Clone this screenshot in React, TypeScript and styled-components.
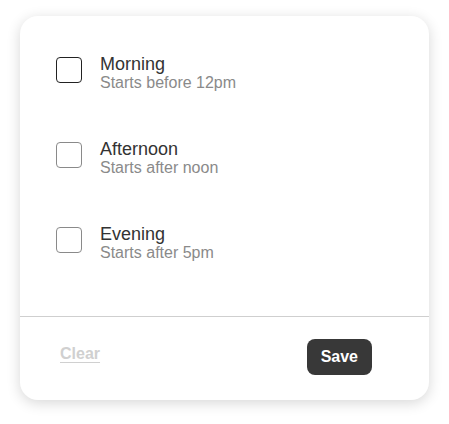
import React, { useState } from 'react';
import styled, { createGlobalStyle } from 'styled-components';

const GlobalStyle = createGlobalStyle`
  body {
    margin: 0;
    background: #ffffff;
    font-family: "Liberation Sans", Arial, sans-serif;
  }
`

const Page = styled.div`
  padding: 16px 20px;
`

const Card = styled.div`
  width: 409px;
  height: 384px;
  box-sizing: border-box;
  background: #fff;
  border-radius: 18px;
  box-shadow: 0 3px 14px rgba(0, 0, 0, 0.16);
  display: flex;
  flex-direction: column;
`

const List = styled.div`
  display: flex;
  flex-direction: column;
  gap: 48px;
  padding: 38px 36px 55px;
`

const Row = styled.label`
  display: flex;
  align-items: flex-start;
  gap: 18px;
  cursor: pointer;
`

const Box = styled.span<{ $focused?: boolean }>`
  width: 26px;
  height: 26px;
  box-sizing: border-box;
  margin-top: 3px;
  border: 1px solid ${p => (p.$focused ? '#222' : '#8a8a8a')};
  border-radius: 4px;
  flex-shrink: 0;
`

const Text = styled.div`
  display: flex;
  flex-direction: column;
`

const Title = styled.div`
  font-size: 18px;
  line-height: 20px;
  color: #333;
`

const Sub = styled.div`
  font-size: 16px;
  line-height: 17px;
  color: #8a8a8a;
`

const Divider = styled.div`
  height: 1px;
  background: #cfcfcf;
`

const Footer = styled.div`
  display: flex;
  justify-content: space-between;
  align-items: flex-start;
  padding: 22px 57px 0 40px;
`

const ClearLink = styled.button`
  margin-top: 6px;
  padding: 0;
  border: none;
  background: none;
  font-family: inherit;
  font-size: 16px;
  line-height: 18px;
  font-weight: bold;
  color: #d0d0d0;
  text-decoration: underline;
  text-underline-offset: 3px;
  cursor: pointer;
`

const SaveButton = styled.button`
  height: 36px;
  padding: 0 14px;
  border: none;
  border-radius: 8px;
  background: #383838;
  color: #fff;
  font-family: inherit;
  font-size: 16px;
  font-weight: bold;
  cursor: pointer;
`

const options = [
  { title: 'Morning', sub: 'Starts before 12pm' },
  { title: 'Afternoon', sub: 'Starts after noon' },
  { title: 'Evening', sub: 'Starts after 5pm' },
];

const App: React.FC = () => {
  const [focused] = useState(0);
  return (
    <Page>
      <GlobalStyle />
      <Card>
        <List>
          {options.map((o, i) => (
            <Row key={o.title}>
              <Box $focused={i === focused} />
              <Text>
                <Title>{o.title}</Title>
                <Sub>{o.sub}</Sub>
              </Text>
            </Row>
          ))}
        </List>
        <Divider />
        <Footer>
          <ClearLink>Clear</ClearLink>
          <SaveButton>Save</SaveButton>
        </Footer>
      </Card>
    </Page>
  );
}

export default App;
